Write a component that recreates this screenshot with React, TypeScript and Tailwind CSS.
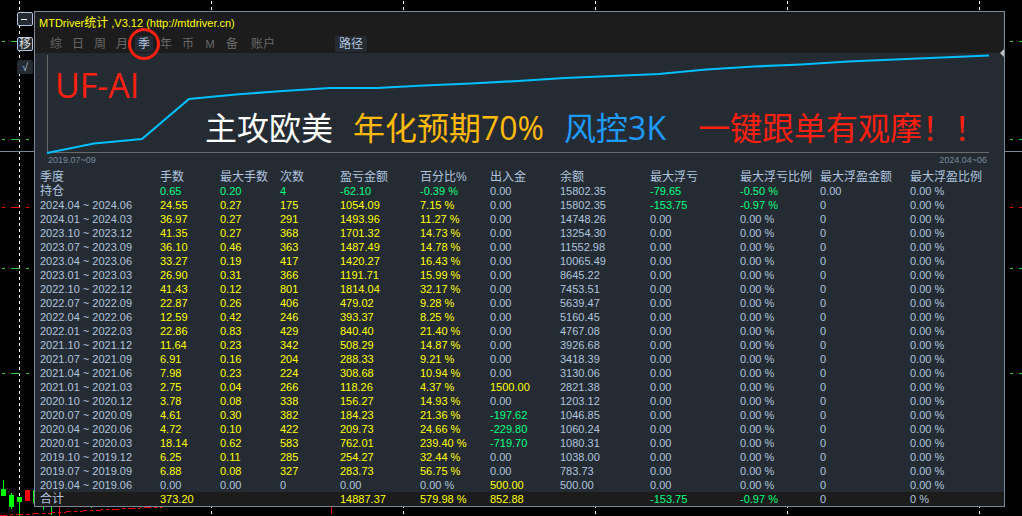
import React from 'react';
import { clsx } from 'clsx';

const tabs = ['综', '日', '周', '月', '季', '年', '币', 'M', '备', '账户'];

const columns = [
  { title: '季度', width: 'w-[125px] pl-[5px]' },
  { title: '手数', width: 'w-[60px]' },
  { title: '最大手数', width: 'w-[60px]' },
  { title: '次数', width: 'w-[60px]' },
  { title: '盈亏金额', width: 'w-[80px]' },
  { title: '百分比%', width: 'w-[70px]' },
  { title: '出入金', width: 'w-[70px]' },
  { title: '余额', width: 'w-[90px]' },
  { title: '最大浮亏', width: 'w-[90px]' },
  { title: '最大浮亏比例', width: 'w-[80px]' },
  { title: '最大浮盈金额', width: 'w-[90px]' },
  { title: '最大浮盈比例', width: '' },
];

// period, lots, max lots, trades, profit, percent, deposit, balance, max loss, max loss %, max gain, max gain %
const rows = [
  ['持仓', '0.65', '0.20', '4', '-62.10', '-0.39 %', '0.00', '15802.35', '-79.65', '-0.50 %', '0.00', '0.00 %'],
  ['2024.04 ~ 2024.06', '24.55', '0.27', '175', '1054.09', '7.15 %', '0.00', '15802.35', '-153.75', '-0.97 %', '0', '0.00 %'],
  ['2024.01 ~ 2024.03', '36.97', '0.27', '291', '1493.96', '11.27 %', '0.00', '14748.26', '0.00', '0.00 %', '0', '0.00 %'],
  ['2023.10 ~ 2023.12', '41.35', '0.27', '368', '1701.32', '14.73 %', '0.00', '13254.30', '0.00', '0.00 %', '0', '0.00 %'],
  ['2023.07 ~ 2023.09', '36.10', '0.46', '363', '1487.49', '14.78 %', '0.00', '11552.98', '0.00', '0.00 %', '0', '0.00 %'],
  ['2023.04 ~ 2023.06', '33.27', '0.19', '417', '1420.27', '16.43 %', '0.00', '10065.49', '0.00', '0.00 %', '0', '0.00 %'],
  ['2023.01 ~ 2023.03', '26.90', '0.31', '366', '1191.71', '15.99 %', '0.00', '8645.22', '0.00', '0.00 %', '0', '0.00 %'],
  ['2022.10 ~ 2022.12', '41.43', '0.12', '801', '1814.04', '32.17 %', '0.00', '7453.51', '0.00', '0.00 %', '0', '0.00 %'],
  ['2022.07 ~ 2022.09', '22.87', '0.26', '406', '479.02', '9.28 %', '0.00', '5639.47', '0.00', '0.00 %', '0', '0.00 %'],
  ['2022.04 ~ 2022.06', '12.59', '0.42', '246', '393.37', '8.25 %', '0.00', '5160.45', '0.00', '0.00 %', '0', '0.00 %'],
  ['2022.01 ~ 2022.03', '22.86', '0.83', '429', '840.40', '21.40 %', '0.00', '4767.08', '0.00', '0.00 %', '0', '0.00 %'],
  ['2021.10 ~ 2021.12', '11.64', '0.23', '342', '508.29', '14.87 %', '0.00', '3926.68', '0.00', '0.00 %', '0', '0.00 %'],
  ['2021.07 ~ 2021.09', '6.91', '0.16', '204', '288.33', '9.21 %', '0.00', '3418.39', '0.00', '0.00 %', '0', '0.00 %'],
  ['2021.04 ~ 2021.06', '7.98', '0.23', '224', '308.68', '10.94 %', '0.00', '3130.06', '0.00', '0.00 %', '0', '0.00 %'],
  ['2021.01 ~ 2021.03', '2.75', '0.04', '266', '118.26', '4.37 %', '1500.00', '2821.38', '0.00', '0.00 %', '0', '0.00 %'],
  ['2020.10 ~ 2020.12', '3.78', '0.08', '338', '156.27', '14.93 %', '0.00', '1203.12', '0.00', '0.00 %', '0', '0.00 %'],
  ['2020.07 ~ 2020.09', '4.61', '0.30', '382', '184.23', '21.36 %', '-197.62', '1046.85', '0.00', '0.00 %', '0', '0.00 %'],
  ['2020.04 ~ 2020.06', '4.72', '0.10', '422', '209.73', '24.66 %', '-229.80', '1060.24', '0.00', '0.00 %', '0', '0.00 %'],
  ['2020.01 ~ 2020.03', '18.14', '0.62', '583', '762.01', '239.40 %', '-719.70', '1080.31', '0.00', '0.00 %', '0', '0.00 %'],
  ['2019.10 ~ 2019.12', '6.25', '0.11', '285', '254.27', '32.44 %', '0.00', '1038.00', '0.00', '0.00 %', '0', '0.00 %'],
  ['2019.07 ~ 2019.09', '6.88', '0.08', '327', '283.73', '56.75 %', '0.00', '783.73', '0.00', '0.00 %', '0', '0.00 %'],
  ['2019.04 ~ 2019.06', '0.00', '0.00', '0', '0.00', '0.00 %', '500.00', '500.00', '0.00', '0.00 %', '0', '0.00 %'],
];

const total = ['合计', '373.20', '', '', '14887.37', '579.98 %', '852.88', '', '-153.75', '-0.97 %', '0', '0 %'];

const gridX = [19, 211, 403, 595, 787, 979];

const levels = [
  { y: 41, color: '#32cd32' },
  { y: 139, color: '#32cd32' },
  { y: 207, color: '#ff0000' },
  { y: 268, color: '#32cd32' },
  { y: 373, color: '#32cd32' },
];

const candles = [
  { x: 1, top: 489, height: 7, high: 480, low: 496, color: '#00ff00' },
  { x: 9, top: 495, height: 12, high: 493, low: 509, color: '#00ff00' },
  { x: 17, top: 497, height: 5, high: 497, low: 516, color: '#00ff00' },
  { x: 25, top: 490, height: 11, high: 490, low: 501, color: '#ff0000' },
  { x: 33, top: 490, height: 13, high: 490, low: 503, color: '#00ff00' },
  { x: 41, top: 500, height: 4, high: 500, low: 510, color: '#00ff00' },
  { x: 49, top: 500, height: 4, high: 500, low: 515, color: '#00ff00' },
  { x: 57, top: 500, height: 4, high: 500, low: 516, color: '#ff0000' },
  { x: 89, top: 500, height: 4, high: 500, low: 508, color: '#00ff00' },
  { x: 329, top: 500, height: 4, high: 500, low: 514, color: '#ff0000' },
];

const cellColor = (value: string, col: number, holding: boolean) => {
  if (col === 0 || col === 7 || col > 9) return '';
  const n = parseFloat(value);
  if (n < 0) return 'text-[#00ff7f]';
  if (col > 7 || !n) return '';
  return holding ? 'text-[#00ff7f]' : 'text-[#ffff00]';
};

const PriceChart = () => (
  <svg className="absolute inset-0 w-full h-full" shapeRendering="crispEdges" aria-hidden="true">
    {gridX.map((x) => (
      <line key={x} x1={x + 0.5} x2={x + 0.5} y1="1" y2="100%" stroke="#ffffff" strokeDasharray="3 3" />
    ))}
    {levels.map((level) => (
      <line key={level.y} x1="2" x2="100%" y1={level.y + 0.5} y2={level.y + 0.5} stroke={level.color} strokeDasharray="3 6 9 6" />
    ))}
    <line x1="0" x2="100%" y1="151.5" y2="151.5" stroke="#778899" />
    {candles.map((c) => (
      <g key={c.x} fill={c.color}>
        <rect x={c.x} y={c.top} width="5" height={c.height} />
        <rect x={c.x + 2} y={c.high} width="1" height={c.low - c.high} />
      </g>
    ))}
    <path d="M0 515.5 L44 513.5 L74 511.5 L110 509.5 L150 507.5 L175 506.5" fill="none" stroke="#ff0000" strokeDasharray="7 3 3 3" />
  </svg>
);

const EquityCurve = () => (
  <div className="relative h-[101px] pl-3 pr-[15px]">
    <svg className="block w-full h-full overflow-visible" viewBox="0 0 942 101" preserveAspectRatio="none" aria-hidden="true">
      <path d="M0.5 2 V99.5 H942" fill="none" stroke="#696969" vectorEffect="non-scaling-stroke" shapeRendering="crispEdges" />
      <polyline
        points="0,100 47,90.5 95,86 142,46 189,41.5 236,38 283,35 330,35 377,32.5 424,30.5 471,28 518,25 565,23 612,21 659,16.5 707,13.5 754,11.5 801,8.5 848,6.5 895,4.5 942,2.5"
        fill="none"
        stroke="#00bfff"
        strokeWidth="2.2"
        vectorEffect="non-scaling-stroke"
      />
    </svg>
    <svg className="absolute right-0 -top-1 w-1 h-2" viewBox="0 0 4 8" aria-hidden="true">
      <path d="M4 0 L0 4 L4 8 Z" fill="#c0c0c0" />
    </svg>
    <div className="absolute left-5 top-3 text-[34px] leading-10 text-[#ff2010] font-['Open_Sans','Noto_Sans_CJK_SC',sans-serif]">UF-AI</div>
    <div className="absolute left-[170px] top-[55px] flex items-center text-[32px] leading-10 whitespace-nowrap font-['Open_Sans','Noto_Sans_CJK_SC',sans-serif]">
      <span className="text-white">主攻欧美</span>
      <span className="ml-5 text-[#ffb90a]">年化预期70%</span>
      <span className="ml-5 text-[#1e9bff]">风控3K</span>
      <span className="ml-8 text-[#ff2010]">一键跟单有观摩！！</span>
    </div>
  </div>
);

const SideButtons = () => (
  <div className="w-[34px] shrink-0 flex flex-col items-end pt-px pr-px">
    <button aria-label="最小化" className="w-4 h-[14px] flex items-center pl-[3px] rounded-xs border border-[#b0c4de] bg-[#242b33]">
      <span className="w-[6px] h-px bg-white" />
    </button>
    <button className="mt-[11px] w-4 h-[14px] flex items-center justify-center rounded-xs border border-[#b0c4de] bg-[#242b33] text-[12px] leading-3 text-[#e0e0e0]">移</button>
    <button className="mt-[9px] w-4 h-[14px] flex items-center justify-center rounded-xs bg-[#242b33] text-[11px] leading-3 text-[#b0c4de]">√</button>
  </div>
);

const PanelHeader = () => (
  <div className="mr-px h-[41px] bg-[#1c1c1c]">
    <h1 className="h-[22px] pl-1 text-[11px] leading-[22px] text-[#ffff00]">
      MTDriver<span className="text-[12px]">统计</span> ,V3.12 (http://mtdriver.cn)
    </h1>
    <div className="flex items-center pl-[10px] pt-[2px] text-[12px] leading-4 text-[#696969]">
      {tabs.map((tab) => (
        <button
          key={tab}
          className={clsx(
            'relative h-4 flex items-center justify-center',
            tab.length > 1 ? 'w-10' : 'w-[22px]',
            tab === 'M' && 'text-[11px]',
            tab === '季' && 'text-[#b0c4de]'
          )}
        >
          <span className={clsx('px-[3px] rounded-xs', tab === '季' && 'bg-[#242b33]')}>{tab}</span>
          {tab === '季' && <span className="absolute z-10 -left-[5px] -top-2 size-8 rounded-full border-3 border-[#ff2010]" />}
        </button>
      ))}
      <button className="ml-[52px] h-4 px-1 rounded-xs bg-[#242b33] text-[#b0c4de]">路径</button>
    </div>
  </div>
);

const StatsTable = () => (
  <table className="w-full table-fixed text-left text-[11px] leading-[14px] whitespace-nowrap">
    <thead>
      <tr className="text-[12px]">
        {columns.map((col) => (
          <th key={col.title} className={clsx('h-[14px] py-0 font-normal', col.width)}>
            {col.title}
          </th>
        ))}
      </tr>
    </thead>
    <tbody>
      {rows.map((row, r) => (
        <tr key={row[0]}>
          {row.map((value, i) => (
            <td key={i} className={clsx('h-[14px] p-0', i === 0 && 'pl-[5px]', i === 0 && r === 0 && 'text-[12px]', cellColor(value, i, r === 0))}>
              {value}
            </td>
          ))}
        </tr>
      ))}
    </tbody>
    <tfoot>
      <tr className="bg-[#1c1c1c]">
        {total.map((value, i) => (
          <td key={i} className={clsx('h-[14px] p-0', i === 0 && 'pl-[5px] text-[12px]', cellColor(value, i, false))}>
            {value}
          </td>
        ))}
      </tr>
    </tfoot>
  </table>
);

const App = () => {
  return (
    <div className="relative min-h-screen overflow-hidden bg-black font-['Liberation_Sans','Noto_Sans_CJK_SC',sans-serif]">
      <PriceChart />
      <main className="relative flex items-start pt-[11px] pr-[17px]">
        <SideButtons />
        <section className="flex-1 min-w-0 border border-[#778899] bg-[#242b33] text-[#b0c4de]">
          <PanelHeader />
          <EquityCurve />
          <div className="flex justify-between h-4 pl-[13px] pr-[17px] text-[9px] leading-3 text-[#778899]">
            <span>2019.07~09</span>
            <span>2024.04~06</span>
          </div>
          <StatsTable />
        </section>
      </main>
    </div>
  );
};

export default App;
